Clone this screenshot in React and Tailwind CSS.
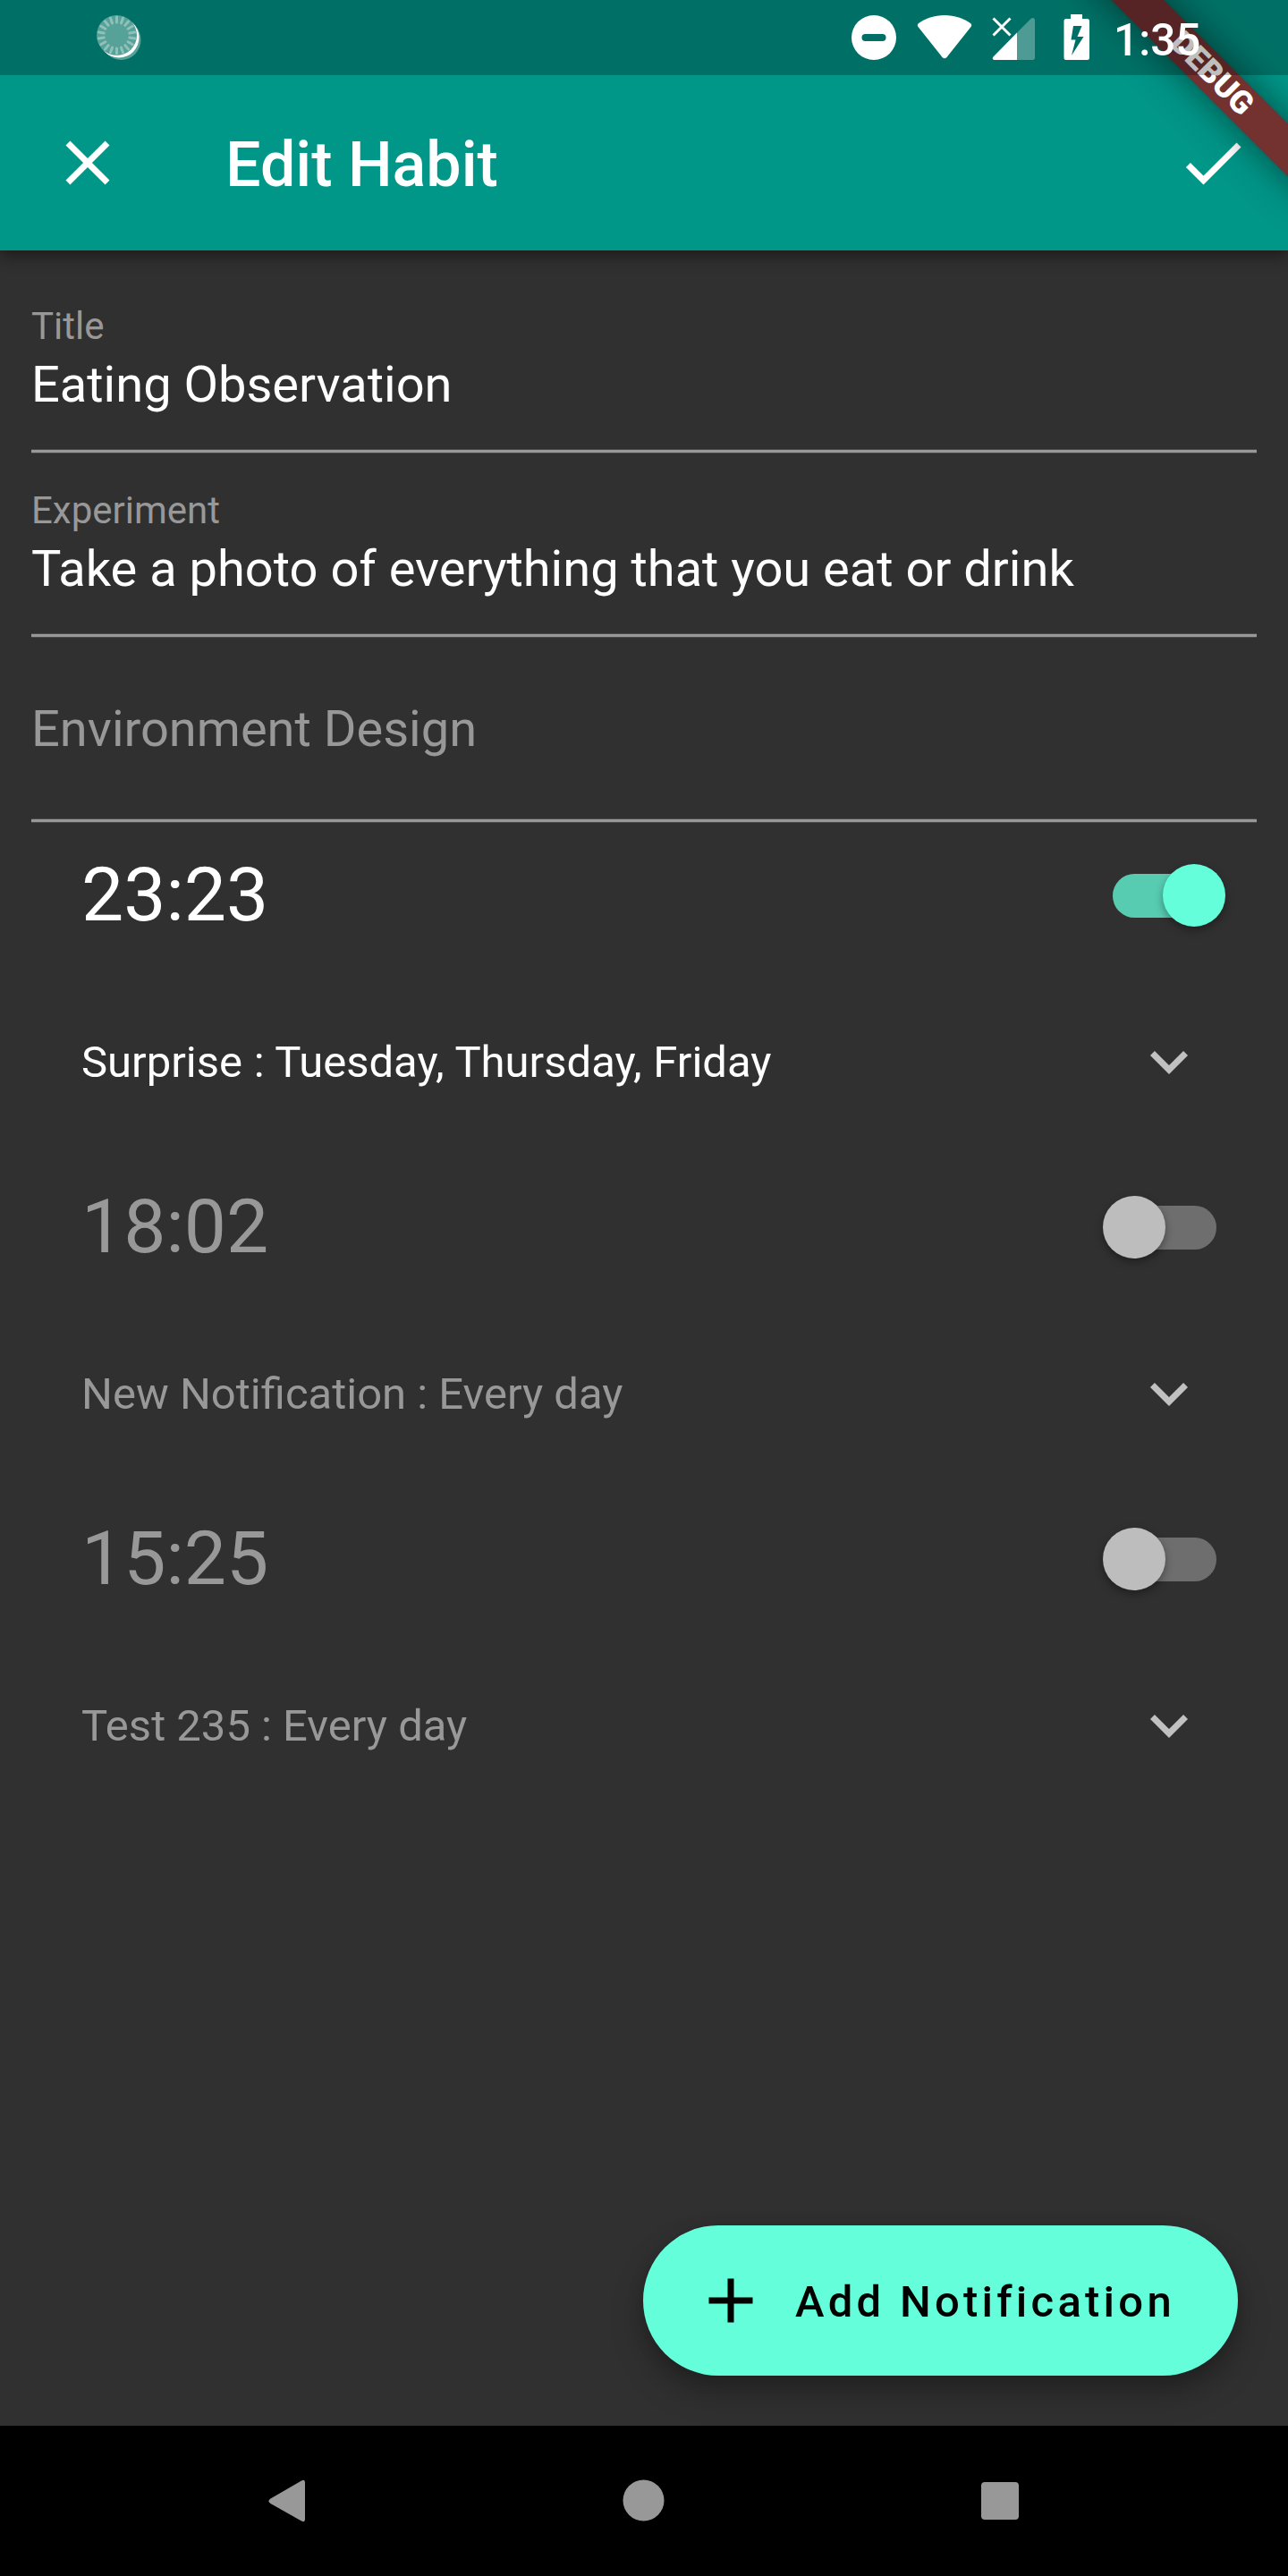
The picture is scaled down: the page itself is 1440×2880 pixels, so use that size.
const FIELDS = [
  { label: "Title", value: "Eating Observation" },
  { label: "Experiment", value: "Take a photo of everything that you eat or drink" },
  { label: "Environment Design", value: "" },
];

const NOTIFICATIONS = [
  { time: "23:23", text: "Surprise : Tuesday, Thursday, Friday", on: true },
  { time: "18:02", text: "New Notification : Every day", on: false },
  { time: "15:25", text: "Test 235 : Every day", on: false },
];

const RAYS = Array.from({ length: 18 }, (_, i) => i * 20);

function StatusBar() {
  return (
    <div className="relative z-30 flex h-[84px] items-center bg-black/25 pl-[105px] text-white">
      <svg className="h-[56px] w-[56px]" viewBox="0 0 56 56">
        <ellipse cx="30.500" cy="30.500" rx="22" ry="22.500" fill="#56a198" />
        <circle cx="28" cy="28" r="22.500" fill="#fff" />
        <circle cx="25.500" cy="25.500" r="22.500" fill="#56a198" />
        {RAYS.map((a) => (
          <path key={a} d="M25.500 5v6" stroke="#8fc0b9" strokeWidth="3" strokeLinecap="round" transform={`rotate(${a} 25.500 25.500)`} />
        ))}
      </svg>
      <div className="ml-auto flex h-[84px] items-center">
        <svg className="h-[84px] w-[300px]" viewBox="940 0 300 84" fill="currentColor">
          <path fillRule="evenodd" d="M977 17a25 25 0 1 0 0 50a25 25 0 1 0 0-50zM967.500 38h19a4 4 0 0 1 0 8h-19a4 4 0 0 1 0-8z" />
          <path d="M1056 17c11.500 0 21 3.500 29 9c1.500 1.200 1.500 2.500.5 4l-27 34c-1.500 1.700-3.500 1.700-5 0l-27-34c-1-1.500-1-2.800.5-4c8-5.500 17.500-9 29-9z" />
          <path d="M1137 67V36.500l15.500-15.500c2-2 4.500-1 4.500 1.500v42c0 1.500-1 2.500-2.500 2.500z" opacity=".3" />
          <path d="M1137 36.500V67h-25c-2 0-3-2-1.500-3.500z" />
          <path d="M1110.500 20.500l19 19M1129.500 20.500l-19 19" stroke="currentColor" strokeWidth="3" />
          <path fillRule="evenodd" d="M1197 16h13v5h5.500a2.500 2.500 0 0 1 2.500 2.500v41a2.500 2.500 0 0 1-2.500 2.500h-23.500a2.500 2.500 0 0 1-2.500-2.500v-41a2.500 2.500 0 0 1 2.500-2.500h5zM1200 29l-2.500 15.500h5l-4.500 17.500l13.500-21h-7l5-12z" />
        </svg>
        <span className="mt-[5px] w-[200px] pl-[5px] text-[49.500px] leading-[84px] font-medium">1:35</span>
      </div>
    </div>
  );
}

function DebugRibbon() {
  return (
    <div className="absolute top-0 right-0 z-20 h-[280px] w-[280px] overflow-hidden">
      <div className="absolute top-[49px] -right-[92px] flex h-[42px] w-[380px] rotate-45 items-center justify-center bg-[#733130] pl-[36px] text-[35.700px] leading-none font-black text-white shadow-[0_0_42px_rgba(0,0,0,0.5)]">
        DEBUG
      </div>
    </div>
  );
}

function AppBar() {
  return (
    <header className="relative z-10 flex h-[196px] items-center pr-[42px] text-white">
      <svg className="ml-[56px] h-[84px] w-[84px]" viewBox="0 0 24 24" fill="currentColor">
        <path d="M19 6.410L17.590 5 12 10.590 6.410 5 5 6.410 10.590 12 5 17.590 6.410 19 12 13.410 17.590 19 19 17.590 13.410 12z" />
      </svg>
      <h1 className="mt-[4px] ml-[112px] flex-1 text-[70px] leading-[82px] font-medium">Edit Habit</h1>
      <svg className="h-[84px] w-[84px]" viewBox="0 0 24 24" fill="currentColor">
        <path d="M9 16.170L4.830 12l-1.420 1.410L9 19 21 7l-1.410-1.410z" />
      </svg>
    </header>
  );
}

function Field({ label, value }) {
  return (
    <div className={value ? "flex h-[206px] flex-col" : "flex h-[207px] flex-col"}>
      {value ? (
        <>
          <span className="mt-[39px] text-[42px] leading-[50px] text-[#989898]">{label}</span>
          <span className="mt-[7px] text-[56px] leading-[66px] text-white">{value}</span>
        </>
      ) : (
        <span className="mt-[69px] text-[56px] leading-[66px] text-[#989898]">{label}</span>
      )}
      <span className="mt-auto h-[5px] border-y border-[#4a4a4a] bg-[#989898]" />
    </div>
  );
}

function Switch({ on }) {
  return on ? (
    <span className="mr-[35px] flex h-[49px] w-[126px] items-center justify-end rounded-full bg-linear-to-r from-[#57ccb1] from-90% to-transparent to-90%">
      <span className="h-[70px] w-[70px] shrink-0 rounded-full bg-[#64ffda] shadow-[0_4px_10px_rgba(0,0,0,0.35)]" />
    </span>
  ) : (
    <span className="mr-[45px] flex h-[49px] w-[127px] items-center rounded-full bg-linear-to-l from-[#6e6e6e] from-90% to-transparent to-90%">
      <span className="h-[70px] w-[70px] shrink-0 rounded-full bg-[#bdbdbd] shadow-[0_4px_10px_rgba(0,0,0,0.35)]" />
    </span>
  );
}

function Notification({ time, text, on }) {
  return (
    <section
      className={
        on
          ? "h-[371px] pl-[56px] text-white [word-spacing:0.5px]"
          : "h-[371px] pl-[56px] text-[#989898]"
      }
    >
      <div className="flex h-[162px] items-center justify-between">
        <span className="text-[84px] leading-[98px]">{time}</span>
        <Switch on={on} />
      </div>
      <div className="mt-[21px] flex h-[168px] items-center justify-between pr-[56px]">
        <span className="mt-[2px] text-[49px] leading-[58px]">{text}</span>
        <svg className="h-[84px] w-[84px] text-[#c1c1c1]" viewBox="0 0 24 24" fill="currentColor">
          <path d="M16.590 8.590L12 13.170 7.410 8.590 6 10l6 6 6-6z" />
        </svg>
      </div>
    </section>
  );
}

export default function App() {
  return (
    <div className="relative flex h-[2880px] w-[1440px] flex-col overflow-hidden bg-[#303030] font-['Roboto',sans-serif]">
      <div className="relative z-10 h-[280px] bg-[#009688] shadow-[0_7px_16px_rgba(0,0,0,0.4)]">
        <DebugRibbon />
        <StatusBar />
        <AppBar />
      </div>
      <main className="flex flex-1 flex-col px-[35px] pt-[21px]">
        {FIELDS.map((f) => (
          <Field key={f.label} {...f} />
        ))}
        {NOTIFICATIONS.map((n) => (
          <Notification key={n.time} {...n} />
        ))}
        <button className="mt-auto mr-[21px] mb-[56px] flex h-[168px] w-[665px] items-center self-end rounded-full bg-[#64ffda] pl-[56px] text-black shadow-[0_20px_35px_rgba(0,0,0,0.25),0_4px_18px_rgba(0,0,0,0.15)]">
          <svg className="h-[84px] w-[84px]" viewBox="0 0 24 24" fill="currentColor">
            <path d="M19 13h-6v6h-2v-6H5v-2h6V5h2v6h6v2z" />
          </svg>
          <span className="mt-[4px] ml-[30px] text-[49px] leading-[58px] font-medium tracking-[4.250px] whitespace-nowrap">Add Notification</span>
        </button>
      </main>
      <nav className="flex h-[168px] items-center bg-black text-[#989898]">
        <svg className="ml-[290px] h-[60px] w-[60px]" viewBox="0 0 60 60" fill="currentColor">
          <path d="M12.500 27.500L47 7.500q4-2 4 2v41q0 4-4 2L12.500 33q-4-3 0-5.500z" />
        </svg>
        <svg className="ml-[339px] h-[60px] w-[60px]" viewBox="0 0 60 60" fill="currentColor">
          <circle cx="30.500" cy="29.500" r="23" />
        </svg>
        <svg className="ml-[339px] h-[60px] w-[60px]" viewBox="0 0 60 60" fill="currentColor">
          <rect x="9" y="9" width="42" height="42" rx="4" />
        </svg>
      </nav>
    </div>
  );
}
